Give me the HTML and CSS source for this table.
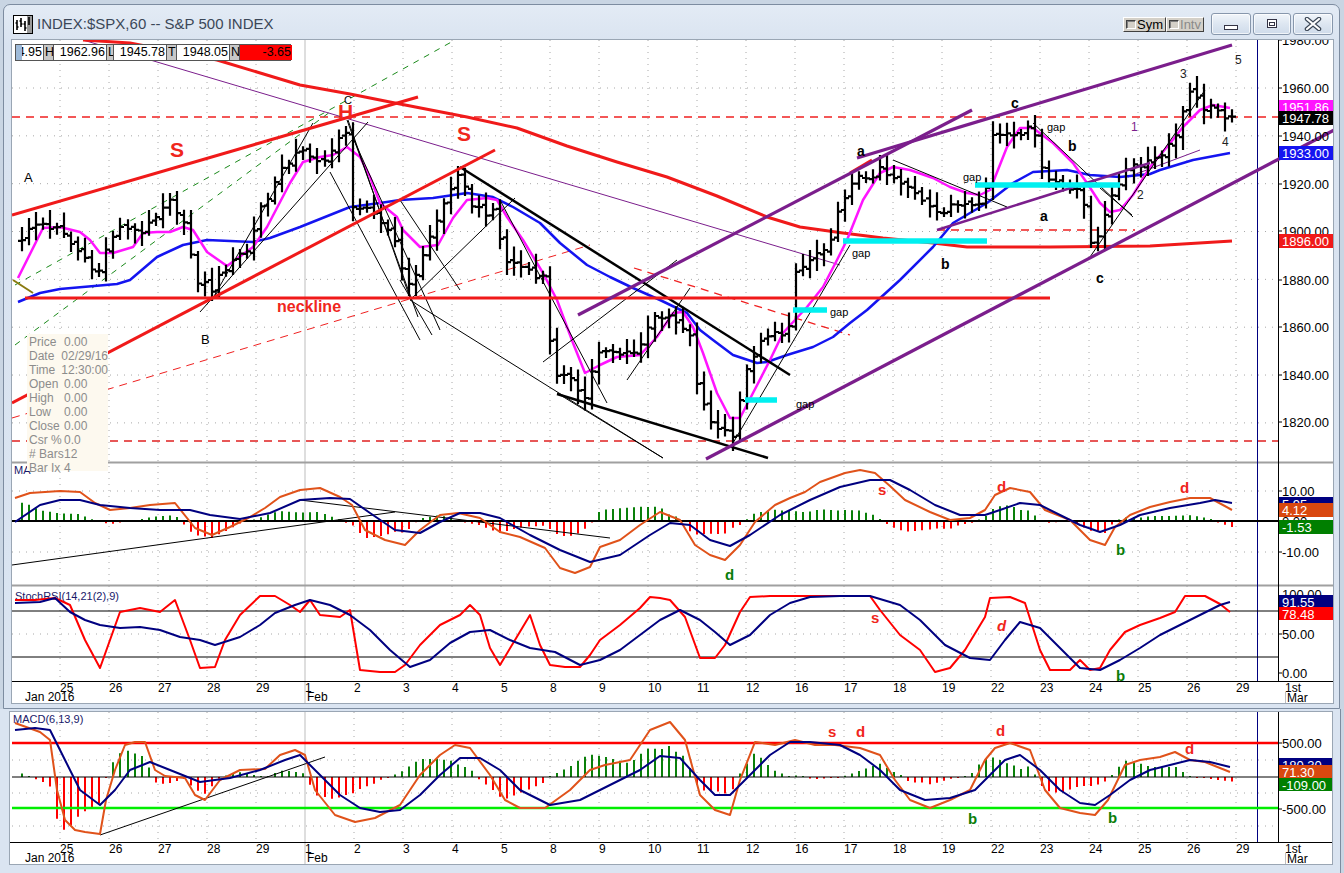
FILE: index.html
```html
<!DOCTYPE html>
<html>
<head>
<meta charset="utf-8">
<title>INDEX:$SPX,60 -- S&amp;P 500 INDEX</title>
<link rel="stylesheet" href="styles.css">
</head>
<body>
<div class="win win1">
  <div class="titlebar">
    <svg class="appicon" width="20" height="19" viewBox="0 0 20 19">
      <rect x="0.5" y="0.5" width="19" height="18" fill="#fff" stroke="#000"/>
      <rect x="14" y="1" width="5" height="17" fill="#9a9a9a"/>
      <path d="M4 5V15M2.5 8H4M4 12H5.5M8 3V12M6.5 6H8M8 9H9.5M12 6V16M10.5 9H12M12 13H13.5M16 2V10" stroke="#000" stroke-width="1.6" fill="none"/>
    </svg>
    <span class="title">INDEX:$SPX,60 -- S&amp;P 500 INDEX</span>
    <div class="tbright">
      <div class="tools">
        <span class="tbtn"><i class="chk"></i>Sym</span>
        <span class="tbtn dis"><i class="chk"></i>Intv</span>
      </div>
      <div class="caps">
        <span class="cap cmin"><svg width="16" height="8" viewBox="0 0 16 8"><rect x="1.5" y="2.5" width="13" height="4" fill="#fff" stroke="#334"/></svg></span>
        <span class="cap cmax"><svg width="14" height="12" viewBox="0 0 14 12"><rect x="2.5" y="1.5" width="9" height="8" fill="#fff" stroke="#334"/><rect x="4.5" y="4.5" width="5" height="3" fill="none" stroke="#334"/></svg></span>
        <span class="cap cclose"><svg width="18" height="14" viewBox="0 0 18 14"><path d="M3 2L15 12M15 2L3 12" stroke="#3b4655" stroke-width="4.5" stroke-linecap="round"/><path d="M3 2L15 12M15 2L3 12" stroke="#fff" stroke-width="2.2" stroke-linecap="round"/></svg></span>
      </div>
    </div>
  </div>
  <div class="client">
    <svg id="c1" class="chart" width="1321" height="663" viewBox="12 40 1321 663"></svg>
    <div class="strip">
      <span class="cell c1"><b class="lb"></b>4.95</span>
      <span class="cell key">H</span>
      <span class="cell val">1962.96</span>
      <span class="cell key kl">L</span>
      <span class="cell val">1945.78</span>
      <span class="cell key">T</span>
      <span class="cell val">1948.05</span>
      <span class="cell key">N</span>
      <span class="cell val neg">-3.65</span>
    </div>
    <div class="infobox">
      <div class="irow"><span>Price</span><span>0.00</span></div>
      <div class="irow"><span>Date</span><span>02/29/16</span></div>
      <div class="irow"><span>Time</span><span>12:30:00</span></div>
      <div class="irow"><span>Open</span><span>0.00</span></div>
      <div class="irow"><span>High</span><span>0.00</span></div>
      <div class="irow"><span>Low</span><span>0.00</span></div>
      <div class="irow"><span>Close</span><span>0.00</span></div>
      <div class="irow"><span>Csr %</span><span>0.0</span></div>
      <div class="irow"><span># Bars</span><span>12</span></div>
      <div class="irow"><span>Bar Ix</span><span>4</span></div>
    </div>
  </div>
</div>
<div class="win win2">
  <div class="client client2">
    <svg id="c2" class="chart" width="1322" height="152" viewBox="10 712 1322 152"></svg>
  </div>
</div>
<script src="script.js"></script>
</body>
</html>
```

FILE: styles.css
```css
* { box-sizing: border-box; }
html, body { margin: 0; padding: 0; }
body {
  width: 1344px;
  height: 873px;
  overflow: hidden;
  background: #c9d5e3;
  font-family: "Liberation Sans", Arial, sans-serif;
}
.win { background: #dae4f1; }
.win1 {
  margin: 4px 0 0 3px;
  width: 1337px;
  height: 705px;
  border: 1px solid #7d8ca0;
  border-radius: 7px 7px 0 0;
  display: flex;
  flex-direction: column;
  position: relative;
  z-index: 2;
  background: linear-gradient(#e3ebf5, #d9e3f0 40px, #dae4f1);
}
.titlebar {
  height: 34px;
  display: flex;
  align-items: flex-start;
  padding: 0 6px 0 9px;
}
.appicon { margin-top: 10px; flex: none; }
.title {
  margin: 10px 0 0 4px;
  font-size: 15px;
  line-height: 18px;
  color: #3b4758;
  white-space: nowrap;
}
.tbright { margin-left: auto; display: flex; align-items: flex-start; }
.tools { display: flex; margin-top: 12px; margin-right: 7px; }
.tbtn {
  display: flex;
  align-items: center;
  height: 15px;
  padding: 0 2px 0 2px;
  background: #d4d0c8;
  border: 1px solid;
  border-color: #fff #404040 #404040 #fff;
  font-size: 13px;
  line-height: 13px;
  color: #000;
}
.tbtn.dis { color: #8a8a8a; }
.chk {
  display: inline-block;
  width: 10px;
  height: 9px;
  margin-right: 1px;
  background: #d4d0c8;
  border: 1px solid;
  border-color: #404040 #fff #fff #404040;
  box-shadow: inset 1px 1px 0 #808080;
}
.caps { display: flex; gap: 2px; margin-top: 8px; }
.cap {
  height: 22px;
  border: 1px solid #8797ac;
  border-radius: 3px;
  background: linear-gradient(#f1f5fa, #dde6f1 50%, #cfdbea);
  display: flex;
  align-items: center;
  justify-content: center;
  box-shadow: inset 0 0 0 1px rgba(255,255,255,0.7);
}
.cmin { width: 40px; padding-top: 6px; }
.cmax { width: 38px; }
.cclose { width: 40px; }
.client {
  margin-left: 7px;
  width: 1323px;
  height: 665px;
  border: 1px solid #9aa6b4;
  background: #fff;
  position: relative;
}
.chart { display: block; }
.win2 {
  width: 1341px;
  height: 164px;
  border-right: 1px solid #7d8ca0;
  padding: 2px 0 0 9px;
}
.client2 { margin-left: 0; width: 1324px; height: 154px; }

/* data strip overlay */
.strip {
  position: absolute;
  left: 3px;
  top: 4px;
  width: 276px;
  height: 17px;
  display: flex;
  border: 1px solid #555;
  background: #fff;
  font-size: 12.5px;
  line-height: 15px;
  color: #000;
}
.cell {
  flex: none;
  height: 15px;
  text-align: right;
  padding-right: 1px;
  border-right: 1px solid #555;
  white-space: nowrap;
  overflow: hidden;
}
.cell:last-child { border-right: none; }
.c1 { width: 28px; position: relative; text-indent: -3px; }
.lb { position: absolute; left: 0; top: 0; width: 6px; height: 15px; background: #9fbbd9; }
.key { width: 10px; background: #c8c8c8; text-align: left; padding-left: 1px; }
.kl { width: 7px; }
.val { width: 53px; }
.neg { width: 52px; background: #ff0000; }

/* info box overlay */
.infobox {
  position: absolute;
  left: 15px;
  top: 294px;
  width: 81px;
  height: 137px;
  background: #fdf9ef;
  padding: 1px 0 0 2px;
  font-size: 12px;
  color: #8c8c8c;
}
.irow { display: flex; height: 14px; line-height: 14px; }
.irow span:first-child { width: 35px; white-space: nowrap; }

/* svg text */
.ax { font: 13px "Liberation Sans", Arial, sans-serif; fill: #000; }
.axw { font: 13px "Liberation Sans", Arial, sans-serif; fill: #fff; }
.dt { font: 12px "Liberation Sans", Arial, sans-serif; fill: #000; }
.ind { font: 11px "Liberation Sans", Arial, sans-serif; fill: #18186a; }
.big { font: bold 21px "Liberation Sans", Arial, sans-serif; fill: #f0261c; }
.neck { font: bold 16px "Liberation Sans", Arial, sans-serif; fill: #f0261c; }
.wav { font: bold 14px "Liberation Sans", Arial, sans-serif; fill: #000; }
.wavs { font: 13px "Liberation Sans", Arial, sans-serif; fill: #000; }
.gap { font: 11px "Liberation Sans", Arial, sans-serif; fill: #000; }
.num { font: 12px "Liberation Sans", Arial, sans-serif; fill: #222; }
.numP { font: 12px "Liberation Sans", Arial, sans-serif; fill: #7b1e8c; }
.rl { font: bold 15px "Liberation Sans", Arial, sans-serif; fill: #f0261c; }
.rli { font: italic bold 15px "Liberation Sans", Arial, sans-serif; fill: #f0261c; }
.gl { font: bold 15px "Liberation Sans", Arial, sans-serif; fill: #0a7d0a; }
```

FILE: script.js
```js
(function () {
  var NS = 'http://www.w3.org/2000/svg';
  function el(p, tag, a, t) {
    var e = document.createElementNS(NS, tag);
    for (var k in a) e.setAttribute(k, a[k]);
    if (t !== undefined) e.textContent = t;
    p.appendChild(e);
    return e;
  }
  function P(pts) { return pts.map(function (q) { return q[0] + ',' + q[1]; }).join(' '); }
  function poly(p, pts, stroke, w, o) {
    var a = { points: P(pts), fill: 'none', stroke: stroke, 'stroke-width': w, 'stroke-linejoin': 'round' };
    for (var k in (o || {})) a[k] = o[k];
    return el(p, 'polyline', a);
  }
  function line(p, x1, y1, x2, y2, stroke, w, o) {
    var a = { x1: x1, y1: y1, x2: x2, y2: y2, stroke: stroke, 'stroke-width': w };
    for (var k in (o || {})) a[k] = o[k];
    return el(p, 'line', a);
  }
  function text(p, x, y, s, cls, o) {
    var a = { x: x, y: y, 'class': cls };
    for (var k in (o || {})) a[k] = o[k];
    return el(p, 'text', a, s);
  }
  function rect(p, x, y, w, h, fill) { return el(p, 'rect', { x: x, y: y, width: w, height: h, fill: fill }); }
  function interp(pts, x) {
    if (x <= pts[0][0]) return pts[0][1];
    for (var i = 1; i < pts.length; i++) {
      if (x <= pts[i][0]) {
        var a = pts[i - 1], b = pts[i];
        return a[1] + (b[1] - a[1]) * (x - a[0]) / (b[0] - a[0]);
      }
    }
    return pts[pts.length - 1][1];
  }
  function rnd(i) { var s = Math.sin(i * 12.9898 + 78.233) * 43758.5453; return s - Math.floor(s); }
  function py(p) { return 88 + (1960 - p) * 2.392; }

  var GX = [];
  for (var k = 0; k < 26; k++) GX.push(60 + 49 * k);
  var DL = ['25','26','27','28','29','1','2','3','4','5','8','9','10','11','12','16','17','18','19','22','23','24','25','26','29','1st'];

  var BX = [];
  for (var i = 0; i < 173; i++) BX.push(22 + i * (1210 / 172));

  /* ================= WINDOW 1 ================= */
  var c1 = document.getElementById('c1');

  // grid
  var g = el(c1, 'g', {});
  [1960, 1940, 1920, 1900, 1880, 1860, 1840, 1820].forEach(function (p) {
    line(g, 12, py(p), 1278, py(p), '#a8a8a8', 1, { 'stroke-dasharray': '1 6' });
  });
  [491, 552].forEach(function (y) { line(g, 12, y, 1278, y, '#a8a8a8', 1, { 'stroke-dasharray': '1 6' }); });
  [634].forEach(function (y) { line(g, 12, y, 1278, y, '#a8a8a8', 1, { 'stroke-dasharray': '1 6' }); });
  GX.forEach(function (x, k) {
    if (k === 25) return;
    if (k === 5) { line(g, x, 40, x, 703, '#bdbdbd', 1); return; }
    line(g, x, 40, x, 681, '#a8a8a8', 1, { 'stroke-dasharray': '1 5' });
  });

  // frame lines
  line(c1, 12, 462.5, 1333, 462.5, '#a0a0a0', 2);
  line(c1, 12, 585.5, 1333, 585.5, '#a0a0a0', 2);
  line(c1, 12, 681.5, 1333, 681.5, '#000', 1);
  line(c1, 1278.5, 40, 1278.5, 681, '#000', 1);
  line(c1, 1257.5, 40, 1257.5, 681, '#000080', 1);
  line(c1, 1285.5, 692, 1285.5, 703, '#bdbdbd', 1);

  // ---- price panel ----
  var pp = el(c1, 'g', {});
  line(pp, 12, 117, 1278, 117, '#f02020', 1.3, { 'stroke-dasharray': '8 6' });
  line(pp, 12, 441, 1278, 441, '#e02020', 1.3, { 'stroke-dasharray': '8 6' });
  line(pp, 15, 285, 455, 40, '#1a8a1a', 1, { 'stroke-dasharray': '6 6' });
  line(pp, 15, 345, 330, 112, '#1a8a1a', 1, { 'stroke-dasharray': '6 6' });
  line(pp, 13, 280, 33, 293, '#8a7a10', 2);
  line(pp, 83, 40, 840, 265, '#7b1e8c', 1);
  line(pp, 1128, 177, 1200, 150, '#7b1e8c', 1);
  line(pp, 12, 418, 590, 245, '#f02020', 1, { 'stroke-dasharray': '8 6' });
  line(pp, 634, 268, 850, 335, '#f02020', 1.3, { 'stroke-dasharray': '8 6' });
  line(pp, 937, 230, 1135, 230, '#f02020', 1.3, { 'stroke-dasharray': '8 6' });

  poly(pp, [[83,40],[130,43],[217,60],[300,85],[350,94],[400,104],[467,117],[517,128],[567,146],[617,162],[667,177],[717,196],[767,217],[800,227],[843,233],[883,238],[933,243],[967,247],[1050,247],[1150,246],[1232,241]], '#f01a1a', 3);

  var keys = [[20,1897],[40,1904],[60,1900],[75,1893],[100,1883],[110,1897],[125,1902],[145,1900],[172,1913],[183,1905],[195,1880],[213,1876],[230,1888],[250,1893],[258,1908],[278,1922],[298,1935],[315,1928],[335,1935],[345,1943],[352,1912],[370,1907],[392,1900],[410,1875],[420,1888],[435,1902],[450,1918],[458,1922],[475,1910],[495,1907],[505,1888],[530,1884],[545,1880],[552,1842],[570,1837],[585,1832],[598,1850],[620,1848],[640,1852],[655,1866],[675,1862],[690,1856],[700,1830],[712,1820],[732,1815],[742,1835],[752,1848],[765,1855],[790,1860],[796,1882],[815,1890],[830,1893],[843,1915],[860,1922],[880,1925],[900,1920],[925,1913],[943,1908],[960,1912],[985,1914],[990,1940],[1010,1942],[1035,1942],[1045,1922],[1080,1918],[1093,1892],[1105,1908],[1115,1915],[1125,1927],[1150,1930],[1168,1935],[1180,1945],[1187,1958],[1200,1953],[1215,1950],[1232,1948]];
  var d = '';
  var prev = 1896;
  BX.forEach(function (x, i) {
    var c = interp(keys, x) + (rnd(i) - 0.5) * 4;
    if (i === BX.length - 1) c = 1948.05;
    var o = prev + (rnd(i + 300) - 0.5) * 2;
    var h = Math.max(o, c) + 1.5 + rnd(i + 600) * 4.5;
    var l = Math.min(o, c) - 1.5 - rnd(i + 900) * 4.5;
    var xx = Math.round(x);
    d += 'M' + xx + ' ' + py(h).toFixed(1) + 'V' + py(l).toFixed(1);
    d += 'M' + (xx - 4) + ' ' + py(o).toFixed(1) + 'H' + xx;
    d += 'M' + xx + ' ' + py(c).toFixed(1) + 'H' + (xx + 4);
    prev = c;
  });

  var blue = [[18,302],[40,293],[60,289],[117,284],[130,280],[157,257],[183,245],[207,240],[253,242],[270,238],[300,227],[350,207],[380,203],[400,200],[433,198],[467,193],[493,197],[513,207],[540,223],[560,243],[587,265],[610,277],[633,288],[660,300],[687,313],[700,330],[713,340],[733,355],[757,363],[767,362],[787,355],[813,347],[833,337],[850,323],[867,310],[900,280],[933,247],[953,223],[987,203],[1013,183],[1033,172],[1067,170],[1090,175],[1120,177],[1150,174],[1160,170],[1193,160],[1230,153]];
  var mag = [[18,278],[43,228],[60,227],[80,232],[90,240],[100,253],[113,253],[133,247],[143,233],[157,232],[170,232],[183,227],[193,230],[207,252],[227,266],[253,247],[267,227],[290,183],[303,162],[320,157],[333,155],[347,147],[360,157],[370,177],[380,203],[397,217],[403,230],[420,247],[438,245],[453,218],[467,200],[487,198],[497,200],[507,217],[523,240],[543,273],[557,300],[573,343],[585,373],[600,365],[617,357],[640,355],[657,337],[673,313],[683,312],[693,327],[703,353],[717,393],[730,418],[740,418],[753,393],[770,360],[783,333],[807,307],[823,287],[837,260],[847,240],[863,200],[880,173],[893,167],[910,170],[933,178],[950,187],[967,193],[980,195],[990,190],[1007,147],[1020,128],[1033,128],[1053,143],[1073,163],[1087,183],[1100,203],[1110,212],[1120,210],[1133,195],[1150,167],[1167,147],[1183,127],[1200,110],[1213,105],[1230,108]];
  poly(pp, blue, '#1414f0', 2.5);
  poly(pp, mag, '#ff14ff', 2.5);
  el(pp, 'path', { d: d, stroke: '#000', 'stroke-width': 2.2, fill: 'none' });

  var thin = [[200,312,368,122],[213,298,313,123],[348,120,410,298],[347,120,418,317],[330,172,420,340],[353,138,440,330],[400,280,432,335],[410,300,663,458],[557,393,663,458],[410,300,515,198],[400,200,460,290],[500,200,607,403],[543,362,677,260],[627,380,690,288],[733,443,850,245],[893,160,1007,207],[1033,123,1133,217],[1090,257,1205,90],[1100,188,1132,215]];
  thin.forEach(function (t) { line(pp, t[0], t[1], t[2], t[3], '#000', 1); });

  line(pp, 460, 167, 790, 375, '#000', 2.5);
  line(pp, 557, 394, 768, 458, '#000', 2.5);

  line(pp, 12, 215, 418, 97, '#f01a1a', 3);
  line(pp, 12, 403, 495, 150, '#f01a1a', 3);
  line(pp, 25, 298, 1050, 298, '#f01a1a', 3);
  line(pp, 850, 173, 872, 160, '#f01a1a', 3);

  line(pp, 706, 459, 1340, 127, '#7b1e8c', 3.2);
  line(pp, 578, 315, 972, 110, '#7b1e8c', 3.2);
  line(pp, 857, 158, 1232, 45, '#7b1e8c', 3.2);
  line(pp, 937, 230, 1150, 163, '#7b1e8c', 2.5);

  [[745,777,400],[793,827,310],[843,987,241],[975,1120,185]].forEach(function (c) {
    line(pp, c[0], c[2], c[1], c[2], '#00f0f0', 5.5);
  });

  text(pp, 24, 182, 'A', 'wavs');
  text(pp, 170, 157, 'S', 'big');
  text(pp, 338, 119, 'H', 'big');
  text(pp, 344, 104, 'C', 'wavs', { style: 'font-size:11px' });
  text(pp, 457, 141, 'S', 'big');
  text(pp, 277, 312, 'neckline', 'neck');
  text(pp, 201, 344, 'B', 'wavs');
  text(pp, 857, 156, 'a', 'wav');
  text(pp, 941, 269, 'b', 'wav');
  text(pp, 1011, 108, 'c', 'wav');
  text(pp, 1068, 151, 'b', 'wav');
  text(pp, 1040, 221, 'a', 'wav');
  text(pp, 1096, 283, 'c', 'wav');
  text(pp, 796, 408, 'gap', 'gap');
  text(pp, 830, 316, 'gap', 'gap');
  text(pp, 852, 257, 'gap', 'gap');
  text(pp, 963, 181, 'gap', 'gap');
  text(pp, 1047, 131, 'gap', 'gap');
  text(pp, 1131, 131, '1', 'numP');
  text(pp, 1137, 199, '2', 'num');
  text(pp, 1180, 78, '3', 'num');
  text(pp, 1222, 146, '4', 'num');
  text(pp, 1235, 64, '5', 'num');

  var axl = [[1980,40],[1960,88],[1940,136],[1920,184],[1900,231],[1880,280],[1860,327],[1840,375],[1820,422]];
  axl.forEach(function (a) {
    line(c1, 1278, a[1], 1282, a[1], '#000', 1);
    text(c1, 1282, a[1] + 5, a[0].toFixed(2), 'ax');
  });
  function tag(p, y, label, fill, h) {
    rect(p, 1279, y, 54, h || 14, fill);
    text(p, 1282, y + 12, label, 'axw');
  }
  tag(c1, 100, '1951.86', '#ff14ff');
  tag(c1, 111, '1947.78', '#000');
  tag(c1, 146, '1933.00', '#1414f0');
  tag(c1, 234, '1896.00', '#f01a1a');

  // ---- indicator panel 1 ----
  var p1 = el(c1, 'g', {});
  text(p1, 14, 474, 'MA', 'ind');
  var or1 = [[15,498],[30,493],[60,491],[80,492],[95,503],[110,510],[130,508],[150,505],[175,503],[195,528],[212,535],[230,527],[250,517],[265,508],[280,497],[300,490],[320,488],[340,497],[352,505],[365,530],[385,540],[405,545],[420,530],[440,515],[458,513],[480,518],[500,532],[520,537],[545,548],[560,568],[575,573],[590,567],[600,547],[620,540],[640,525],[660,512],[680,520],[695,545],[710,555],[725,560],[740,545],[755,522],[775,505],[790,498],[805,492],[820,482],[845,473],[860,470],[875,473],[890,486],[905,500],[930,512],[950,520],[970,518],[985,510],[995,495],[1010,488],[1030,492],[1045,510],[1070,520],[1090,540],[1105,545],[1115,527],[1130,515],[1150,507],[1170,502],[1190,498],[1210,498],[1232,510]];
  var nv1 = [[15,522],[40,505],[60,500],[80,500],[100,505],[130,508],[160,510],[190,510],[210,515],[240,519],[270,513],[300,500],[330,498],[350,499],[370,513],[395,530],[420,533],[440,522],[460,513],[480,513],[500,518],[530,535],[560,550],[590,562],[620,555],[650,535],[670,523],[690,525],[710,540],[730,546],[750,535],[780,515],[810,500],[840,487],[870,480],[890,480],[910,490],[935,505],[960,515],[985,515],[1000,510],[1020,503],[1040,505],[1060,515],[1080,525],[1100,532],[1120,525],[1140,515],[1170,508],[1200,503],[1215,500],[1232,503]];
  var hd = '', hr = '';
  BX.forEach(function (x) {
    var v = (interp(nv1, x) - interp(or1, x)) * 0.85;
    var xx = Math.round(x);
    if (Math.abs(v) < 1) v = v < 0 ? -1 : 1;
    if (v > 0) hd += 'M' + xx + ' 521V' + (521 - v).toFixed(1);
    else hr += 'M' + xx + ' 521V' + (521 - v).toFixed(1);
  });
  el(p1, 'path', { d: hd, stroke: '#0a800a', 'stroke-width': 2, fill: 'none' });
  el(p1, 'path', { d: hr, stroke: '#ff0000', 'stroke-width': 2, fill: 'none' });
  line(p1, 12, 521, 1278, 521, '#000', 2);
  line(p1, 12, 565, 395, 512, '#000', 1);
  line(p1, 300, 500, 610, 538, '#000', 1);
  poly(p1, or1, '#e0521a', 2);
  poly(p1, nv1, '#000080', 2);
  text(p1, 878, 495, 's', 'rl');
  text(p1, 997, 492, 'd', 'rl');
  text(p1, 1180, 493, 'd', 'rl');
  text(p1, 725, 580, 'd', 'gl');
  text(p1, 1116, 555, 'b', 'gl');
  [[10,491,'10.00'],[-10,552,'-10.00']].forEach(function (a) {
    line(c1, 1278, a[1], 1282, a[1], '#000', 1);
    text(c1, 1282, a[1] + 5, a[2], 'ax');
  });
  text(c1, 1282, 526, '0.00', 'ax');
  tag(c1, 497, '5.95', '#000080', 11);
  tag(c1, 503, '4.12', '#d9480f', 14);
  tag(c1, 520, '-1.53', '#007f00', 14);

  // ---- stoch panel ----
  var p2 = el(c1, 'g', {});
  text(p2, 15, 600, 'StochRSI(14,21(2),9)', 'ind');
  line(p2, 12, 611, 1278, 611, '#000', 1);
  line(p2, 12, 657, 1278, 657, '#000', 1);
  var rs = [[15,600],[35,600],[55,598],[70,605],[85,640],[100,668],[110,640],[120,612],[140,608],[160,612],[175,600],[190,640],[200,668],[215,667],[225,640],[240,615],[260,596],[275,596],[290,605],[300,612],[310,600],[320,615],[340,617],[350,610],[360,670],[380,672],[395,672],[405,665],[420,645],[440,625],[460,615],[470,605],[480,615],[490,648],[500,665],[515,640],[530,615],[540,645],[550,665],[565,667],[580,667],[590,655],[600,640],[620,625],[640,608],[650,597],[660,598],[670,600],[685,617],[700,658],[715,658],[725,645],[740,612],[750,597],[770,596],[790,596],[820,596],[850,596],[870,596],[880,610],[900,635],[920,650],[935,672],[950,668],[965,650],[985,617],[990,598],[1010,597],[1025,603],[1040,650],[1050,670],[1070,670],[1080,660],[1090,670],[1100,668],[1110,650],[1125,632],[1140,625],[1160,618],[1175,612],[1185,596],[1205,596],[1220,604],[1230,612]];
  var ns = [[15,603],[40,602],[55,598],[70,612],[85,620],[100,625],[120,628],[140,627],[160,630],[180,637],[200,640],[215,645],[240,637],[260,625],[275,613],[295,605],[310,600],[330,605],[350,615],[370,630],[390,650],[410,667],[430,660],[450,643],[470,632],[490,630],[510,640],[530,648],[555,652],[580,665],[600,660],[620,650],[640,635],[660,620],[680,610],[700,620],[715,632],[730,645],[750,635],[770,615],[790,603],[810,597],[840,596],[870,596],[900,605],[920,620],[945,645],[970,658],[990,660],[1005,640],[1020,622],[1040,628],[1060,648],[1080,668],[1100,670],[1120,660],[1140,648],[1160,635],[1180,625],[1200,615],[1220,605],[1230,602]];
  poly(p2, rs, '#ff0000', 2);
  poly(p2, ns, '#000080', 2);
  text(p2, 871, 623, 's', 'rl');
  text(p2, 997, 631, 'd', 'rli');
  text(p2, 1116, 681, 'b', 'gl');
  text(c1, 1282, 599, '100.00', 'ax');
  tag(c1, 595, '91.55', '#000080', 12);
  tag(c1, 607, '78.48', '#ff0000', 13);
  [[634,'50.00'],[673,'0.00']].forEach(function (a) {
    line(c1, 1278, a[0], 1282, a[0], '#000', 1);
    text(c1, 1282, a[0] + 5, a[1], 'ax');
  });

  GX.forEach(function (x, k) { text(c1, x, 692, DL[k], 'dt'); });
  text(c1, 25, 701, 'Jan 2016', 'dt');
  text(c1, 307, 701, 'Feb', 'dt');
  text(c1, 1287, 702, 'Mar', 'dt');

  /* ================= WINDOW 2 ================= */
  var c2 = document.getElementById('c2');
  var g2 = el(c2, 'g', {});
  [760, 793, 826].forEach(function (y) { line(g2, 12, y, 1278, y, '#a8a8a8', 1, { 'stroke-dasharray': '1 6' }); });
  GX.forEach(function (x, k) {
    if (k === 25) return;
    if (k === 5) { line(g2, x, 712, x, 864, '#bdbdbd', 1); return; }
    line(g2, x, 712, x, 842, '#a8a8a8', 1, { 'stroke-dasharray': '1 5' });
  });
  line(c2, 10, 842.5, 1332, 842.5, '#000', 1);
  line(c2, 1278.5, 712, 1278.5, 842, '#000', 1);
  line(c2, 1257.5, 712, 1257.5, 842, '#000080', 1);
  line(c2, 1285.5, 853, 1285.5, 864, '#bdbdbd', 1);

  var or2 = [[15,723],[40,732],[50,740],[57,790],[65,820],[75,830],[85,832],[100,834],[106,800],[115,770],[125,745],[135,742],[145,742],[155,770],[165,776],[185,778],[195,795],[205,800],[220,780],[240,770],[265,769],[280,755],[295,750],[305,755],[315,790],[335,815],[355,822],[375,818],[400,805],[420,775],[440,755],[455,745],[470,748],[490,775],[505,800],[520,808],[545,808],[570,790],[590,770],[605,765],[630,760],[650,730],[670,722],[685,740],[700,795],[715,810],[730,815],[740,780],[755,742],[775,745],[795,740],[815,745],[835,745],[860,748],[880,755],[895,780],[910,800],[930,808],[950,800],[970,790],[985,760],[995,748],[1010,743],[1030,750],[1045,790],[1060,808],[1080,813],[1095,815],[1108,800],[1125,765],[1140,760],[1160,757],[1175,752],[1190,760],[1205,762],[1230,772]];
  var nv2 = [[15,730],[35,728],[50,730],[65,760],[80,790],[100,805],[115,790],[130,770],[150,762],[170,770],[200,782],[230,778],[260,770],[285,760],[300,755],[320,775],[340,795],[360,808],[380,812],[400,810],[420,795],[440,775],[460,758],[480,758],[500,770],[520,790],[550,805],[580,800],[610,785],[640,770],[660,756],[680,758],[700,780],[715,795],[730,795],[745,780],[770,755],[790,742],[810,742],[840,745],[860,755],[880,770],[900,790],[925,800],[950,798],[975,790],[990,775],[1005,760],[1020,755],[1040,770],[1060,790],[1080,803],[1095,805],[1110,795],[1130,780],[1150,770],[1170,765],[1190,760],[1210,762],[1230,767]];
  var hd2 = '', hr2 = '';
  BX.forEach(function (x) {
    var v = (interp(nv2, x) - interp(or2, x)) * 0.9;
    var xx = Math.round(x);
    if (Math.abs(v) < 1) v = v < 0 ? -1 : 1;
    if (v > 0) hd2 += 'M' + xx + ' 777V' + (777 - v).toFixed(1);
    else hr2 += 'M' + xx + ' 777V' + (777 - v).toFixed(1);
  });
  el(c2, 'path', { d: hd2, stroke: '#0a800a', 'stroke-width': 2, fill: 'none' });
  el(c2, 'path', { d: hr2, stroke: '#ff0000', 'stroke-width': 2, fill: 'none' });
  line(c2, 12, 777, 1278, 777, '#000', 1);
  line(c2, 12, 743, 1278, 743, '#ff0000', 2.5);
  line(c2, 12, 808, 1278, 808, '#00ee00', 2.5);
  line(c2, 100, 835, 325, 757, '#000', 1);
  poly(c2, or2, '#e0521a', 2);
  poly(c2, nv2, '#000080', 2);
  text(c2, 13, 723, 'MACD(6,13,9)', 'ind');
  text(c2, 828, 737, 's', 'rl');
  text(c2, 856, 737, 'd', 'rl');
  text(c2, 996, 736, 'd', 'rl');
  text(c2, 1185, 754, 'd', 'rl');
  text(c2, 968, 824, 'b', 'gl');
  text(c2, 1108, 823, 'b', 'gl');
  [[743,'500.00'],[809,'-500.00']].forEach(function (a) {
    line(c2, 1278, a[0], 1282, a[0], '#000', 1);
    text(c2, 1282, a[0] + 5, a[1], 'ax');
  });
  tag(c2, 758, '180.30', '#000080', 8);
  tag(c2, 765, '71.30', '#d9480f', 13);
  tag(c2, 778, '-109.00', '#007f00', 13);
  GX.forEach(function (x, k) { text(c2, x, 853, DL[k], 'dt'); });
  text(c2, 25, 862, 'Jan 2016', 'dt');
  text(c2, 307, 862, 'Feb', 'dt');
  text(c2, 1287, 863, 'Mar', 'dt');
})();
```
